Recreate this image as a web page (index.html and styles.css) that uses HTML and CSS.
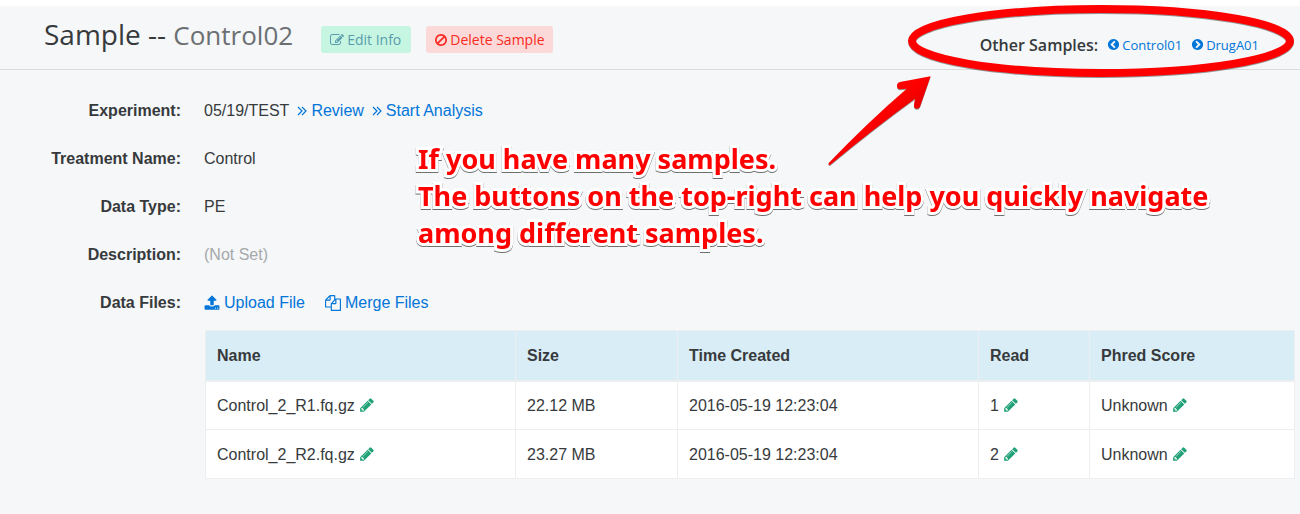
FILE: index.html
```
<!DOCTYPE html>
<html lang="en">
<head>
<meta charset="utf-8">
<title>Sample -- Control02</title>
<link rel="stylesheet" href="styles.css">
</head>
<body>
<svg class="sprite" aria-hidden="true">
  <symbol id="pencil" viewBox="0 0 1792 1792"><path d="M491 1536l91-91-235-235-91 91v107h128v128h107zm523-928q0-22-22-22-10 0-17 7l-542 542q-7 7-7 17 0 22 22 22 10 0 17-7l542-542q7-7 7-17zm-54-192l416 416-832 832h-416v-416zm683 96q0 53-37 90l-166 166-416-416 166-165q36-38 90-38 53 0 91 38l235 234q37 39 37 91z"/></symbol>
  <symbol id="ban" viewBox="0 0 1792 1792"><path d="M1440 893q0-161-87-295l-754 753q137 89 297 89 111 0 211.500-43.500t173.500-116.500 116-174.500 43-212.500zm-999 299l755-754q-135-91-300-91-148 0-273 73t-198 199-73 274q0 162 89 299zm1223-299q0 157-61 300t-163.500 246-245 164-298.500 61-298.500-61-245-164-163.500-246-61-300 61-299.500 163.500-245.500 245-164 298.500-61 298.500 61 245 164 163.500 245.500 61 299.500z"/></symbol>
  <symbol id="edit" viewBox="0 0 1792 1792"><path d="M888 1184l116-116-152-152-116 116v56h96v96h56zm440-720q-16-16-33 1l-350 350q-17 17-1 33t33-1l350-350q17-17 1-33zm80 594v190q0 119-84.500 203.500t-203.500 84.500h-832q-119 0-203.500-84.500t-84.500-203.500v-832q0-119 84.500-203.500t203.500-84.500h832q63 0 117 25 15 7 18 23 3 17-9 29l-49 49q-14 14-32 8-23-6-45-6h-832q-66 0-113 47t-47 113v832q0 66 47 113t113 47h832q66 0 113-47t47-113v-126q0-13 9-22l64-64q15-15 35-7t20 29zm-96-738l288 288-672 672h-288v-288zm444 132l-92 92-288-288 92-92q28-28 68-28t68 28l152 152q28 28 28 68t-28 68z"/></symbol>
  <symbol id="upload" viewBox="0 0 1792 1792"><path d="M1344 1472q0-26-19-45t-45-19-45 19-19 45 19 45 45 19 45-19 19-45zm256 0q0-26-19-45t-45-19-45 19-19 45 19 45 45 19 45-19 19-45zm128-224v320q0 40-28 68t-68 28h-1472q-40 0-68-28t-28-68v-320q0-40 28-68t68-28h427q21 56 70.500 92t110.500 36h256q61 0 110.500-36t70.500-92h427q40 0 68 28t28 68zm-325-648q-17 40-59 40h-256v448q0 26-19 45t-45 19h-256q-26 0-45-19t-19-45v-448h-256q-42 0-59-40-17-39 14-69l448-448q18-19 45-19t45 19l448 448q31 30 14 69z"/></symbol>
  <symbol id="files" viewBox="0 0 1792 1792"><path d="M1696 384q40 0 68 28t28 68v1216q0 40-28 68t-68 28h-960q-40 0-68-28t-28-68v-288h-544q-40 0-68-28t-28-68v-672q0-40 20-88t48-76l408-408q28-28 76-48t88-20h416q40 0 68 28t28 68v328q68-40 128-40h416zm-544 213l-299 299h299v-299zm-640-384l-299 299h299v-299zm196 647l316-316v-416h-384v416q0 40-28 68t-68 28h-416v640h512v-256q0-40 20-88t48-76zm956 804v-1152h-384v416q0 40-28 68t-68 28h-416v640h896z"/></symbol>
  <symbol id="left" viewBox="0 0 1792 1792"><path d="M1037 1395l102-102q19-19 19-45t-19-45l-307-307 307-307q19-19 19-45t-19-45l-102-102q-19-19-45-19t-45 19l-454 454q-19 19-19 45t19 45l454 454q19 19 45 19t45-19zm627-499q0 209-103 385.500t-279.500 279.500-385.500 103-385.500-103-279.500-279.500-103-385.500 103-385.500 279.500-279.500 385.500-103 385.500 103 279.500 279.500 103 385.500z"/></symbol>
  <symbol id="right" viewBox="0 0 1792 1792"><path d="M845 1395l454-454q19-19 19-45t-19-45l-454-454q-19-19-45-19t-45 19l-102 102q-19 19-19 45t19 45l307 307-307 307q-19 19-19 45t19 45l102 102q19 19 45 19t45-19zm819-499q0 209-103 385.500t-279.500 279.500-385.500 103-385.500-103-279.500-279.500-103-385.500 103-385.500 279.500-279.500 385.500-103 385.500 103 279.500 279.500 103 385.500z"/></symbol>
  <symbol id="angles" viewBox="0 0 10 10"><path d="M1 1l4 4-4 4M5 1l4 4-4 4" fill="none" stroke="currentColor" stroke-width="1.2"/></symbol>
</svg>

<header class="page-header">
  <h1 class="title">Sample -- <span class="title-name">Control02</span></h1>
  <div class="actions">
    <button class="btn btn-edit" type="button"><svg class="icon"><use href="#edit"/></svg>Edit Info</button>
    <button class="btn btn-delete" type="button"><svg class="icon"><use href="#ban"/></svg>Delete Sample</button>
  </div>
  <nav class="siblings">
    <strong class="siblings-label">Other Samples:</strong>
    <a class="sibling" href="#"><svg class="icon"><use href="#left"/></svg>Control01</a>
    <a class="sibling" href="#"><svg class="icon"><use href="#right"/></svg>DrugA01</a>
  </nav>
</header>

<main>
  <dl class="details">
    <dt>Experiment:</dt>
    <dd class="experiment">05/19/TEST
      <a class="link" href="#"><svg class="icon angles"><use href="#angles"/></svg>Review</a>
      <a class="link" href="#"><svg class="icon angles"><use href="#angles"/></svg>Start Analysis</a>
    </dd>
    <dt>Treatment Name:</dt>
    <dd>Control</dd>
    <dt>Data Type:</dt>
    <dd>PE</dd>
    <dt>Description:</dt>
    <dd class="unset">(Not Set)</dd>
    <dt>Data Files:</dt>
    <dd>
      <div class="file-actions">
        <a class="link" href="#"><svg class="icon"><use href="#upload"/></svg>Upload File</a>
        <a class="link" href="#"><svg class="icon"><use href="#files"/></svg>Merge Files</a>
      </div>
      <table class="files">
        <colgroup><col class="c-name"><col class="c-size"><col class="c-time"><col class="c-read"><col></colgroup>
        <thead>
          <tr><th>Name</th><th>Size</th><th>Time Created</th><th>Read</th><th>Phred Score</th></tr>
        </thead>
        <tbody>
          <tr>
            <td>Control_2_R1.fq.gz <a class="pencil" href="#" aria-label="Edit name"><svg class="icon"><use href="#pencil"/></svg></a></td>
            <td>22.12 MB</td><td>2016-05-19 12:23:04</td>
            <td>1 <a class="pencil" href="#" aria-label="Edit read"><svg class="icon"><use href="#pencil"/></svg></a></td>
            <td>Unknown <a class="pencil" href="#" aria-label="Edit score"><svg class="icon"><use href="#pencil"/></svg></a></td>
          </tr>
          <tr>
            <td>Control_2_R2.fq.gz <a class="pencil" href="#" aria-label="Edit name"><svg class="icon"><use href="#pencil"/></svg></a></td>
            <td>23.27 MB</td><td>2016-05-19 12:23:04</td>
            <td>2 <a class="pencil" href="#" aria-label="Edit read"><svg class="icon"><use href="#pencil"/></svg></a></td>
            <td>Unknown <a class="pencil" href="#" aria-label="Edit score"><svg class="icon"><use href="#pencil"/></svg></a></td>
          </tr>
        </tbody>
      </table>
    </dd>
  </dl>
</main>

<div class="callout">
  <svg class="callout-marks" viewBox="0 0 480 170" aria-hidden="true">
    <defs>
      <linearGradient id="shade" gradientUnits="userSpaceOnUse" x1="60" y1="106" x2="72" y2="120">
        <stop offset="0" stop-color="#ff0000"/><stop offset="0.5" stop-color="#fc0000"/><stop offset="1" stop-color="#ee0000"/>
      </linearGradient>
    </defs>
    <ellipse class="ring" cx="281" cy="41" rx="189" ry="32"/>
    <path class="arrow" fill="url(#shade)" d="M8.500 163.200Q48 122 86.700 88.700L80 89.300Q77 89 77 86Q77 82.600 80 82.100L110.600 76.300L100 106.800Q99 109.200 96.300 108.800Q93.700 108 94 105.200L95 98.700Q52 130 10 165Q8.500 165.300 8.500 163.200Z"/>
  </svg>
  <p class="callout-text">If you have many samples.<br>The buttons on the top-right can help you quickly navigate<br>among different samples.</p>
</div>
</body>
</html>
```
FILE: styles.css
```
* { box-sizing: border-box; }

body {
  margin: 0;
  padding-top: 6px;
  min-height: 100vh;
  background: linear-gradient(#fff 6px, #f5f7f9 6px);
  color: #373a3c;
  font: 16px/24px "Liberation Sans", Arial, sans-serif;
}

a { color: #0275d8; text-decoration: none; }

.sprite { display: none; }

.icon { width: 1em; height: 1em; fill: currentColor; flex: none; }

.page-header {
  display: flex;
  align-items: center;
  height: 64px;
  padding: 0 41px 0 44px;
  border-bottom: 1px solid #d9dcde;
  font-family: "Open Sans", sans-serif;
}

.title { margin: 0 28px 6px 0; font-size: 28px; font-weight: 400; line-height: 40px; }
.title-name { color: #6b6f72; font-size: 26px; }

.actions { display: flex; gap: 15px; margin-top: 4px; }

.btn {
  display: flex;
  align-items: center;
  gap: 3px;
  height: 27px;
  padding: 0 10px 0 9px;
  border: 0;
  border-radius: 3px;
  font: 14px/20px "Open Sans", sans-serif;
}
.btn-edit { background: #c6f6e1; color: #5a9cad; }
.btn-delete { padding: 0 8px; gap: 2px; background: #fad9d8; color: #fb2a22; }

.siblings { display: flex; align-items: center; gap: 9px; margin: 14px 0 0 auto; }
.siblings-label { font-size: 16px; font-weight: 600; }
.sibling { display: flex; align-items: center; gap: 2px; font-size: 13px; }

.details {
  display: grid;
  grid-template-columns: 181px 1fr;
  column-gap: 23px;
  row-gap: 24px;
  margin: 29px 5px 0 0;
}
.details dt { font-weight: 700; text-align: right; }
.details dd { margin: 0; }
.experiment, .file-actions { display: flex; gap: 8px; }
.file-actions { gap: 20px; }
.unset { color: #a6a8a9; }

.link { display: flex; align-items: center; gap: 4px; }
.link .angles { width: 10px; height: 10px; }

.files {
  width: calc(100% - 1px);
  margin: 15px 0 0 1px;
  border-collapse: collapse;
  table-layout: fixed;
  background: #fff;
}
.files th, .files td { height: 49px; padding: 2px 11px 0; border: 1px solid #eceeef; text-align: left; }
.files th { height: 50px; background: #d9edf7; border-bottom-width: 2px; }
.c-name { width: 310px; }
.c-size { width: 162px; }
.c-time { width: 301px; }
.c-read { width: 111px; }

.pencil { color: #20a178; }
.pencil .icon { vertical-align: -2px; }

/* Annotation laid over the page */
.callout { position: absolute; top: 0; right: 0; width: 882px; pointer-events: none; }
.callout-marks { display: block; width: 480px; height: 170px; margin-left: 402px; overflow: visible; filter: drop-shadow(0 1px 0 rgba(0, 0, 0, 0.4)); }
.ring { fill: none; stroke: #f00; stroke-width: 8px; }
.callout-text {
  margin: -30px 0 0;
  color: #f00;
  font: 700 27px/37px "Noto Sans", sans-serif;
  white-space: nowrap;
  -webkit-text-stroke: 6px #fff;
  paint-order: stroke fill;
  filter: drop-shadow(0 1px 0 rgba(0, 0, 0, 0.55));
}
```
